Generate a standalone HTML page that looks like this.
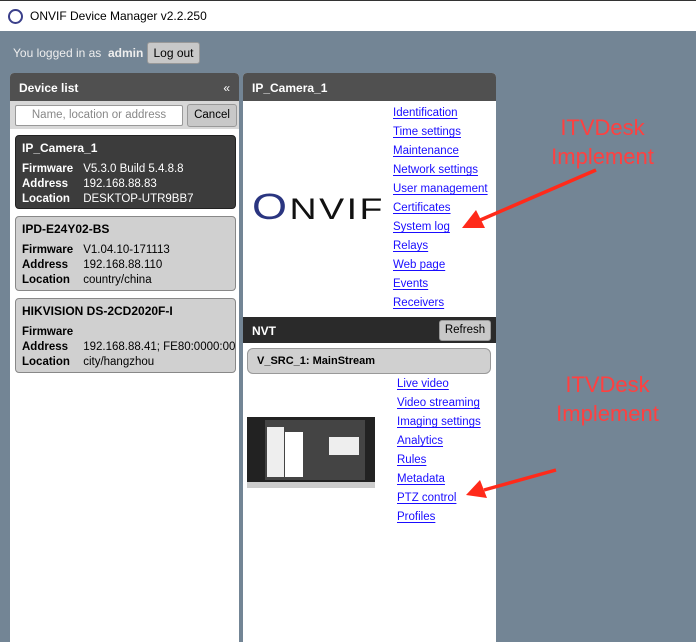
<!DOCTYPE html>
<html><head><style>
*{margin:0;padding:0;box-sizing:border-box}
body{width:696px;height:642px;overflow:hidden;background:#738595;font-family:"Liberation Sans",sans-serif;font-size:11.5px;position:relative}
.abs{position:absolute}
.title{left:0;top:0;width:696px;height:31px;background:#fff;border-top:1px solid #333}
.title span{position:absolute;left:30px;top:8px;font-size:12px;color:#000}
.logo{left:8px;top:8px;width:15px;height:15px;border-radius:50%;border:2px solid #3a3f8a;background:#fff}
.btn{background:#c8c8c8;border:1px solid #999;border-radius:3px;color:#000;text-align:center}
.card{left:15px;width:221px;border-radius:4px;border:1px solid #888;padding:4px 6px;line-height:15px}
.card b{display:inline-block;width:58px}
.card .h{font-weight:bold;font-size:12px;margin-bottom:6px;margin-top:1px}
.links{left:393px;line-height:19px}
.links div{color:#1a0dff;text-decoration:underline;text-underline-offset:2px}
.red{color:#ff4040;font-size:22px;text-align:center;line-height:29px}
</style></head><body>
<div class="abs title"><div class="abs logo"></div><span>ONVIF Device Manager v2.2.250</span></div>
<div class="abs" style="left:13px;top:46px;color:#eee;font-size:12px">You logged in as&nbsp; <b>admin</b></div>
<div class="abs btn" style="left:147px;top:42px;width:53px;height:22px;line-height:20px;font-size:12px">Log out</div>

<div class="abs" style="left:10px;top:73px;width:229px;height:569px;background:#fff;border-radius:4px 4px 0 0;overflow:hidden">
 <div style="height:28px;background:#505050;color:#fff;font-weight:bold;padding:8px 9px;font-size:12px">Device list<span style="float:right;font-weight:normal">«</span></div>
 <div style="height:28px;background:#d8d8d8;position:relative">
  <div class="abs" style="left:5px;top:4px;width:168px;height:21px;background:#fff;border:1px solid #999;border-radius:2px;color:#888;text-align:center;line-height:19px">Name, location or address</div>
  <div class="abs btn" style="left:177px;top:3px;width:50px;height:23px;line-height:21px">Cancel</div>
 </div>
</div>
<div class="abs card" style="top:135px;height:74px;background:#3c3c3c;color:#fff;border-color:#222"><div class="h">IP_Camera_1</div><b>Firmware</b> V5.3.0 Build 5.4.8.8<br><b>Address</b> 192.168.88.83<br><b>Location</b> DESKTOP-UTR9BB7</div>
<div class="abs card" style="top:216px;height:75px;background:#d0d0d0"><div class="h">IPD-E24Y02-BS</div><b>Firmware</b> V1.04.10-171113<br><b>Address</b> 192.168.88.110<br><b>Location</b> country/china</div>
<div class="abs card" style="top:298px;height:75px;background:#d0d0d0;overflow:hidden;white-space:nowrap"><div class="h">HIKVISION DS-2CD2020F-I</div><b>Firmware</b><br><b>Address</b> 192.168.88.41; FE80:0000:0000<br><b>Location</b> city/hangzhou</div>

<div class="abs" style="left:243px;top:73px;width:253px;height:569px;background:#fff;border-radius:4px 4px 0 0;overflow:hidden">
 <div style="height:28px;background:#505050;color:#fff;font-weight:bold;padding:8px 9px;font-size:12px">IP_Camera_1</div>
 <div style="position:absolute;left:0;top:244px;width:253px;height:26px;background:#2a2a2a;color:#fff;font-weight:bold;padding:7px 9px;font-size:12px">NVT</div>
 <div class="abs btn" style="left:196px;top:247px;width:52px;height:21px;line-height:19px">Refresh</div>
 <div class="abs" style="left:4px;top:275px;width:244px;height:26px;background:#d0d0d0;border:1px solid #999;border-radius:6px;font-weight:bold;font-size:11px;padding:6px 9px">V_SRC_1: MainStream</div>
</div>
<div class="abs" style="left:252px;top:186px;font-size:30px;color:#111;letter-spacing:2px;transform:scaleX(1.25);transform-origin:left"><span style="color:#2a3580;font-size:36px">O</span>NVIF</div>
<div class="links abs" style="top:104px"><div>Identification</div><div>Time settings</div><div>Maintenance</div><div>Network settings</div><div>User management</div><div>Certificates</div><div>System log</div><div>Relays</div><div>Web page</div><div>Events</div><div>Receivers</div></div>
<div class="links abs" style="left:397px;top:375px"><div>Live video</div><div>Video streaming</div><div>Imaging settings</div><div>Analytics</div><div>Rules</div><div>Metadata</div><div>PTZ control</div><div>Profiles</div></div>
<div class="abs" style="left:247px;top:417px;width:128px;height:71px;background:#222">
 <div class="abs" style="left:18px;top:3px;width:100px;height:60px;background:#444"></div>
 <div class="abs" style="left:20px;top:10px;width:17px;height:50px;background:#eee"></div>
 <div class="abs" style="left:38px;top:15px;width:18px;height:45px;background:#fff"></div>
 <div class="abs" style="left:82px;top:20px;width:30px;height:18px;background:#eee"></div>
 <div class="abs" style="left:0;top:65px;width:128px;height:6px;background:#ccc"></div>
</div>
<div class="abs red" style="left:545px;top:113px;width:115px">ITVDesk<br>Implement</div>
<div class="abs red" style="left:550px;top:370px;width:115px">ITVDesk<br>Implement</div>
<svg class="abs" style="left:0;top:0" width="696" height="642">
<line x1="596" y1="170" x2="478" y2="221" stroke="#ff2a1a" stroke-width="3.5"/>
<polygon points="462,228 476,210 485,228" fill="#ff2a1a"/>
<line x1="556" y1="470" x2="484" y2="490" stroke="#ff2a1a" stroke-width="3.5"/>
<polygon points="466,495 480,480 487,498" fill="#ff2a1a"/>
</svg>
</body></html>
